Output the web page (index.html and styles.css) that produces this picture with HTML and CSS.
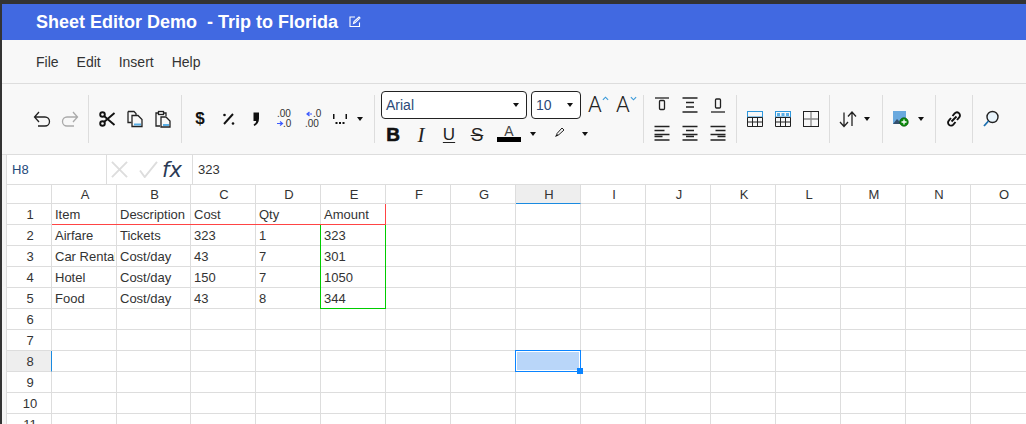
FILE: index.html
```html
<!DOCTYPE html>
<html lang="en">
<head>
<meta charset="utf-8">
<title>Sheet Editor Demo</title>
<link rel="stylesheet" href="styles.css">
</head>
<body>
<div class="app">
  <header class="title-bar">
    <span class="title">Sheet Editor Demo  - Trip to Florida</span>
    <svg class="title-edit" viewBox="0 0 12 12"><path d="M10.500 6.500v4h-9.500v-9.500h5" /><path d="M4.500 7.500l.5-2 5-4.500 1 1-5 4.800z" /></svg>
  </header>
  <nav class="menu-bar"><span>File</span><span>Edit</span><span>Insert</span><span>Help</span></nav>

  <div class="toolbar">
    <div class="group">
      <div class="btn"><svg viewBox="0 0 20 20"><path class="s" d="M2.500 8h10.500a4.500 4.500 0 0 1 0 9H6M7 3L2.500 8 7 13"/></svg></div>
      <div class="btn"><svg viewBox="0 0 20 20"><path class="s off" d="M17.500 8H7a4.500 4.500 0 0 0 0 9h7M13 3l4.500 5-4.500 5"/></svg></div>
    </div>
    <div class="sep"></div>
    <div class="group">
      <div class="btn"><svg viewBox="0 0 20 20"><circle class="s2" cx="5.500" cy="5.500" r="2.300"/><circle class="s2" cx="5.500" cy="14.500" r="2.300"/><path class="s2" d="M7 7l10.500 9M7 13L17.500 4"/></svg></div>
      <div class="btn"><svg viewBox="0 0 20 20"><path class="s" d="M3 2.500h6l2 2v2M3 2.500v11h3.500"/><path class="s" d="M7 6.500h6l4 4v7H7z"/><rect class="blue" x="9" y="14.500" width="7" height="2"/></svg></div>
      <div class="btn"><svg viewBox="0 0 20 20"><path class="s" d="M6 4H3v13h4M10 4h3v3"/><rect class="s" x="5.500" y="2.500" width="5" height="3"/><path class="s" d="M8 8h5l4 4v6H8z"/><rect class="blue" x="10" y="15" width="6" height="2"/></svg></div>
    </div>
    <div class="sep"></div>
    <div class="group g-num">
      <div class="btn glyph-dollar">$</div>
      <div class="btn"><svg viewBox="0 0 20 20"><path class="s2" d="M15 5L6 15"/><circle class="dot" cx="6.500" cy="6" r="1.300"/><circle class="dot" cx="15" cy="14.500" r="1.300"/></svg></div>
      <div class="btn"><svg viewBox="0 0 20 20"><path class="dot" d="M7.500 3.500h5.500v6c0 4-2 6-4.500 7.500l-1-1.200c1.500-1 2.500-2.200 2.700-3.800H7.500z"/></svg></div>
      <div class="btn"><svg viewBox="0 0 20 20"><text class="num" x="3" y="8">.00</text><path class="arrow-b" d="M3 14.500h5M6 12.500l2.500 2-2.500 2"/><text class="num" x="9" y="18">.0</text></svg></div>
      <div class="btn"><svg viewBox="0 0 20 20"><path class="arrow-b" d="M10 5h-5M7.500 3l-2.500 2 2.500 2"/><text class="num" x="11" y="8">.0</text><text class="num" x="3" y="18">.00</text></svg></div>
      <div class="btn"><svg viewBox="0 0 20 20"><rect class="dot" x="3" y="5" width="1.500" height="5"/><rect class="dot" x="15.500" y="5" width="1.500" height="5"/><rect class="dot" x="5.500" y="13" width="2" height="2"/><rect class="dot" x="9" y="13" width="2" height="2"/><rect class="dot" x="12.500" y="13" width="2" height="2"/></svg></div>
      <div class="caret-box w12"><i class="caret"></i></div>
    </div>
    <div class="sep"></div>
    <div class="group font-group">
      <div class="font-row">
        <div class="select font-name"><span>Arial</span><i class="caret"></i></div>
        <div class="select font-size"><span>10</span><i class="caret"></i></div>
        <div class="grow-a">A<svg viewBox="0 0 8 5"><path d="M1 4l3-3 3 3"/></svg></div>
        <div class="grow-a">A<svg viewBox="0 0 8 5"><path d="M1 1l3 3 3-3"/></svg></div>
      </div>
      <div class="style-row">
        <div class="sbtn t-b">B</div>
        <div class="sbtn t-i">I</div>
        <div class="sbtn t-u">U</div>
        <div class="sbtn t-s">S</div>
        <div class="color-a"><span>A</span><b></b></div>
        <div class="caret-box w12"><i class="caret"></i></div>
        <div class="hl"><svg viewBox="0 0 12 12"><path class="s thin" d="M4 7.500L9 2l2 2-5.500 5z"/><path class="dot" d="M2 11l1.500-3 2 1.500z"/></svg></div>
        <div class="caret-box w12"><i class="caret"></i></div>
      </div>
    </div>
    <div class="sep"></div>
    <div class="group align-grid">
      <div class="abtn"><svg viewBox="0 0 20 20"><path class="s" d="M3 3h14"/><rect class="s" x="7.500" y="5.500" width="5" height="9" rx="1"/></svg></div>
      <div class="abtn"><svg viewBox="0 0 20 20"><path class="s" d="M2.500 3h15M6 7.500h8M6 12h8M2.500 17h15"/></svg></div>
      <div class="abtn"><svg viewBox="0 0 20 20"><path class="s" d="M3 17h14"/><rect class="s" x="7.500" y="4" width="5" height="9" rx="1"/></svg></div>
      <div class="abtn"><svg viewBox="0 0 20 20"><path class="s" d="M2.500 3.500h15M2.500 7.500h10M2.500 11.500h15M2.500 13.500h8M2.500 17h15"/></svg></div>
      <div class="abtn"><svg viewBox="0 0 20 20"><path class="s" d="M2.500 3.500h15M6 7.500h8M2.500 11.500h15M6 13.500h8M2.500 17h15"/></svg></div>
      <div class="abtn"><svg viewBox="0 0 20 20"><path class="s" d="M2.500 3.500h15M7.500 7.500h10M2.500 11.500h15M9.500 13.500h8M2.500 17h15"/></svg></div>
    </div>
    <div class="sep"></div>
    <div class="group">
      <div class="btn"><svg viewBox="0 0 20 20"><rect class="s1 b-blue" x="2.500" y="2.500" width="15" height="5.500"/><path class="s1" d="M2.500 8.500v9h15v-9h-15M2.500 13h15M7.500 8.500v9M12.500 8.500v9"/></svg></div>
      <div class="btn"><svg viewBox="0 0 20 20"><rect class="s1 b-blue" x="2.500" y="2.500" width="15" height="5.500"/><rect class="blue" x="4" y="4" width="3" height="3"/><rect class="blue" x="8.500" y="4" width="3" height="3"/><rect class="blue" x="13" y="4" width="3" height="3"/><path class="s1" d="M2.500 8.500v9h15v-9h-15M2.500 13h15M7.500 8.500v9M12.500 8.500v9"/></svg></div>
      <div class="btn"><svg viewBox="0 0 20 20"><path class="s gray" d="M10 3v14M3 10h14"/><rect class="s1" x="2.500" y="2.500" width="15" height="15"/></svg></div>
    </div>
    <div class="sep"></div>
    <div class="group g-sort">
      <div class="btn"><svg viewBox="0 0 20 20"><path class="s" d="M6 3.500v14M2 13l4 4.500 4-4.500M14 17V3M10 7.500L14 3l4 4.500"/></svg></div>
      <div class="caret-box w10"><i class="caret"></i></div>
    </div>
    <div class="sep"></div>
    <div class="group g-img">
      <div class="btn"><svg viewBox="0 0 20 20"><rect x="2" y="2" width="13" height="13" fill="#6aa9de"/><path d="M2 15l4-5 3 3 2-2 4 4z" fill="#34506e"/><circle cx="13" cy="13" r="4.300" fill="#0b8a0b" stroke="#064d06" stroke-width=".6"/><path d="M10.500 13h5M13 10.500v5" stroke="#fff" stroke-width="1.300"/></svg></div>
      <div class="caret-box w12"><i class="caret"></i></div>
    </div>
    <div class="sep"></div>
    <div class="group">
      <div class="btn"><svg viewBox="0 0 20 20"><path class="s2" d="M8.500 7l2.200-2.600a3 3 0 0 1 4.500 4L13 11M11.500 13l-2.200 2.600a3 3 0 0 1-4.500-4L7 9M7.500 12.500l5-5"/></svg></div>
    </div>
    <div class="sep"></div>
    <div class="group">
      <div class="btn"><svg viewBox="0 0 20 20"><circle cx="11.500" cy="8" r="5.500" fill="#e8f4fc" stroke="#222" stroke-width="1.400"/><path d="M7.500 12l-4.500 5" stroke="#1c6fb0" stroke-width="1.800"/></svg></div>
    </div>
  </div>

  <div class="formula-bar">
    <div class="name-box">H8</div>
    <div class="fx-box">
      <svg class="fx-x" viewBox="0 0 20 18"><path d="M2 1l16 16M18 1L2 17"/></svg>
      <svg class="fx-c" viewBox="0 0 20 18"><path d="M1 10l5 7L19 1"/></svg>
      <span class="fx">fx</span>
    </div>
    <div class="formula-value">323</div>
  </div>

  <div class="sheet">
    <div class="ch"></div><div class="ch">A</div><div class="ch">B</div><div class="ch">C</div><div class="ch">D</div><div class="ch">E</div><div class="ch">F</div><div class="ch">G</div><div class="ch active-col">H</div><div class="ch">I</div><div class="ch">J</div><div class="ch">K</div><div class="ch">L</div><div class="ch">M</div><div class="ch">N</div><div class="ch">O</div>
    <div class="rh">1</div><div class="c">Item</div><div class="c">Description</div><div class="c">Cost</div><div class="c">Qty</div><div class="c">Amount</div><div class="c"></div><div class="c"></div><div class="c"></div><div class="c"></div><div class="c"></div><div class="c"></div><div class="c"></div><div class="c"></div><div class="c"></div><div class="c"></div>
    <div class="rh">2</div><div class="c">Airfare</div><div class="c">Tickets</div><div class="c">323</div><div class="c">1</div><div class="c">323</div><div class="c"></div><div class="c"></div><div class="c"></div><div class="c"></div><div class="c"></div><div class="c"></div><div class="c"></div><div class="c"></div><div class="c"></div><div class="c"></div>
    <div class="rh">3</div><div class="c"><span class="clip">Car Rental</span></div><div class="c">Cost/day</div><div class="c">43</div><div class="c">7</div><div class="c">301</div><div class="c"></div><div class="c"></div><div class="c"></div><div class="c"></div><div class="c"></div><div class="c"></div><div class="c"></div><div class="c"></div><div class="c"></div><div class="c"></div>
    <div class="rh">4</div><div class="c">Hotel</div><div class="c">Cost/day</div><div class="c">150</div><div class="c">7</div><div class="c">1050</div><div class="c"></div><div class="c"></div><div class="c"></div><div class="c"></div><div class="c"></div><div class="c"></div><div class="c"></div><div class="c"></div><div class="c"></div><div class="c"></div>
    <div class="rh">5</div><div class="c">Food</div><div class="c">Cost/day</div><div class="c">43</div><div class="c">8</div><div class="c">344</div><div class="c"></div><div class="c"></div><div class="c"></div><div class="c"></div><div class="c"></div><div class="c"></div><div class="c"></div><div class="c"></div><div class="c"></div><div class="c"></div>
    <div class="rh">6</div><div class="c"></div><div class="c"></div><div class="c"></div><div class="c"></div><div class="c"></div><div class="c"></div><div class="c"></div><div class="c"></div><div class="c"></div><div class="c"></div><div class="c"></div><div class="c"></div><div class="c"></div><div class="c"></div><div class="c"></div>
    <div class="rh">7</div><div class="c"></div><div class="c"></div><div class="c"></div><div class="c"></div><div class="c"></div><div class="c"></div><div class="c"></div><div class="c"></div><div class="c"></div><div class="c"></div><div class="c"></div><div class="c"></div><div class="c"></div><div class="c"></div><div class="c"></div>
    <div class="rh active-row">8</div><div class="c"></div><div class="c"></div><div class="c"></div><div class="c"></div><div class="c"></div><div class="c"></div><div class="c"></div><div class="c"></div><div class="c"></div><div class="c"></div><div class="c"></div><div class="c"></div><div class="c"></div><div class="c"></div><div class="c"></div>
    <div class="rh">9</div><div class="c"></div><div class="c"></div><div class="c"></div><div class="c"></div><div class="c"></div><div class="c"></div><div class="c"></div><div class="c"></div><div class="c"></div><div class="c"></div><div class="c"></div><div class="c"></div><div class="c"></div><div class="c"></div><div class="c"></div>
    <div class="rh">10</div><div class="c"></div><div class="c"></div><div class="c"></div><div class="c"></div><div class="c"></div><div class="c"></div><div class="c"></div><div class="c"></div><div class="c"></div><div class="c"></div><div class="c"></div><div class="c"></div><div class="c"></div><div class="c"></div><div class="c"></div>
    <div class="rh">11</div><div class="c"></div><div class="c"></div><div class="c"></div><div class="c"></div><div class="c"></div><div class="c"></div><div class="c"></div><div class="c"></div><div class="c"></div><div class="c"></div><div class="c"></div><div class="c"></div><div class="c"></div><div class="c"></div><div class="c"></div>
    <div class="range-red"></div>
    <div class="range-green"></div>
    <div class="selection"><i class="handle"></i></div>
  </div>
</div>
</body>
</html>
```

FILE: styles.css
```css
* { box-sizing: border-box; }
html, body { margin: 0; height: 424px; overflow: hidden; }
body { background: #333; font-family: "Liberation Sans", Arial, sans-serif; color: #333; }
.app { margin-left: 2px; padding-top: 4px; height: 424px; overflow: hidden; background: linear-gradient(#333 4px, #f5f5f5 4px); }

.title-bar { height: 36px; background: #4169e1; padding-left: 34px; display: flex; align-items: center; color: #fff; }
.title { font-size: 18px; font-weight: 700; white-space: pre; }
.title-edit { width: 12px; height: 12px; margin-left: 11px; fill: none; stroke: #fff; stroke-width: 1.100; }

.menu-bar { height: 44px; background: #f8f8f8; border-bottom: 1px solid #ddd; padding-left: 34px; display: flex; align-items: center; gap: 18px; font-size: 14px; }

.toolbar { height: 71px; background: #f8f8f8; border-bottom: 1px solid #ddd; padding-left: 22px; display: flex; align-items: center; }
.group { display: flex; align-items: center; padding: 0 4px; }
.sep { width: 1px; height: 48px; background: #ddd; flex: none; }
.btn { width: 28px; height: 28px; display: flex; align-items: center; justify-content: center; flex: none; }
.btn svg { width: 20px; height: 20px; display: block; }
.s { fill: none; stroke: #222; stroke-width: 1.300; }
.s1 { fill: none; stroke: #222; stroke-width: 1; }
.s.off { stroke: #aaa; }
.s.gray { stroke: #888; }
.s1.b-blue { stroke: #2f97dc; }
.s.thin { stroke-width: 1; }
.s2 { fill: none; stroke: #111; stroke-width: 1.900; }
.dot { fill: #111; }
.blue { fill: #59aee6; }
.num { font-family: "Liberation Sans", Arial, sans-serif; font-size: 10px; fill: #333; }
.arrow-b { fill: none; stroke: #3d5afe; stroke-width: 1.200; }
.glyph-dollar { font-size: 17px; font-weight: 700; color: #111; }
.g-num { padding-right: 8px; }
.g-sort { padding-right: 10px; }
.g-img { padding-right: 8px; }
.caret-box { display: flex; justify-content: center; align-items: center; flex: none; height: 28px; }
.w12 { width: 12px; }
.w10 { width: 10px; }
.caret { display: block; width: 0; height: 0; border: 3px solid transparent; border-top: 4px solid #111; border-bottom: 0; }

.font-group { flex-direction: column; align-items: flex-start; height: 56px; width: 268px; }
.font-row { display: flex; height: 28px; padding-left: 2px; align-items: center; }
.select { height: 28px; border: 1px solid #222; border-radius: 4px; background: #fff; display: flex; align-items: center; justify-content: space-between; font-size: 14px; color: #2c4a78; padding: 0 7px 0 4px; }
.font-name { width: 146px; }
.font-size { width: 50px; margin-left: 4px; }
.grow-a { width: 28px; height: 28px; position: relative; font-family: Roboto, sans-serif; font-weight: 300; font-size: 22px; line-height: 28px; color: #222; padding-left: 5px; }
.font-size + .grow-a { margin-left: 2px; }
.grow-a svg { width: 7px; height: 5px; fill: none; stroke: #3a9ad9; stroke-width: 1.300; position: absolute; top: 5px; left: 19px; }
.style-row { display: flex; height: 28px; align-items: center; }
.style-row .caret-box { padding-top: 2px; }
.sbtn { width: 28px; height: 28px; display: flex; align-items: center; justify-content: center; color: #222; padding-top: 4px; }
.t-b { font-weight: 700; font-size: 19px; color: #111; -webkit-text-stroke: .6px #111; }
.t-i { font-family: "Liberation Serif", serif; font-style: italic; font-size: 21px; }
.t-u { font-size: 17px; text-decoration: underline; text-underline-offset: 2px; }
.t-s { font-size: 19px; text-decoration: line-through; text-decoration-thickness: 1px; font-weight: 400; }
.color-a { width: 36px; height: 28px; display: flex; flex-direction: column; align-items: center; justify-content: flex-end; padding-bottom: 5px; }
.color-a span { font-size: 14px; line-height: 12px; color: #444; }
.color-a b { display: block; width: 24px; height: 5px; background: #000; }
.hl { width: 40px; height: 28px; display: flex; align-items: flex-start; justify-content: center; padding-top: 7px; }
.hl svg { width: 12px; height: 12px; }

.align-grid { display: grid; grid-template-columns: repeat(3, 28px); grid-auto-rows: 28px; }
.abtn { display: flex; align-items: center; justify-content: center; }
.abtn svg { width: 20px; height: 20px; }

.formula-bar { height: 30px; margin-left: 4px; background: #fff; border: 1px solid #ddd; border-width: 0 0 1px 1px; display: flex; align-items: stretch; font-size: 13px; }
.name-box { width: 100px; padding-left: 5px; line-height: 30px; color: #24497a; border-right: 1px solid #ddd; }
.fx-box { width: 86px; border-right: 1px solid #ddd; display: flex; align-items: center; padding-left: 3px; }
.fx-x, .fx-c { width: 19px; height: 17px; fill: none; stroke: #ddd; stroke-width: 2; }
.fx-c { margin-left: 10px; }
.fx { font-family: "DejaVu Sans", sans-serif; font-style: italic; font-size: 21px; color: #2a3a55; margin-left: 4px; }
.formula-value { padding-left: 5px; line-height: 29px; }

.sheet { position: relative; margin-left: 4px; background: #fff; border-left: 1px solid #ddd; display: grid; grid-template-columns: 45px 65px 74px repeat(13, 65px); grid-template-rows: 19px repeat(11, 21px); font-size: 13px; overflow: hidden; height: 240px; width: 1100px; }
.c, .rh, .ch { border-right: 1px solid #ddd; border-bottom: 1px solid #ddd; overflow: hidden; white-space: nowrap; }
.c { padding-left: 3px; line-height: 22px; }
.clip { display: block; width: 60px; overflow: hidden; }
.rh, .ch { text-align: center; padding-left: 2px; }
.rh { line-height: 22px; }
.ch { line-height: 20px; }
.active-col { background: #eee; border-bottom: 1px solid #1a8ae0; }
.active-row { background: #eee; border-right: 1px solid #1a8ae0; }
.range-red { position: absolute; inset: 0; grid-column: 2 / 7; grid-row: 2 / 3; border-bottom: 1px solid #f44; border-right: 1px solid #f44; }
.range-green { position: absolute; inset: 0 0 0 -1px; grid-column: 6 / 7; grid-row: 3 / 7; border: 1px solid #0c0; border-top: 0; }
.selection { position: absolute; inset: -1px 0 0 -1px; grid-column: 9 / 10; grid-row: 9 / 10; border: 1px solid #0a84ff; background: #b9d6f9; box-shadow: inset 0 0 0 1px #fff; }
.handle { position: absolute; right: -3px; bottom: -3px; width: 6px; height: 6px; background: #0a84ff; }
```
